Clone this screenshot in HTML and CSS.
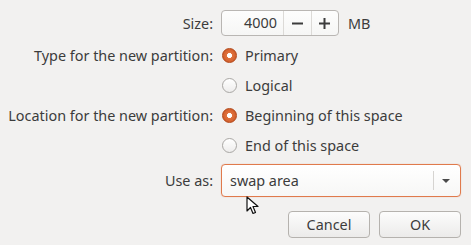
FILE: index.html
```html
<!DOCTYPE html>
<html>
  <head>
    <title>Create partition</title>
    <meta charset="UTF-8"/>
    <link rel="stylesheet" href="styles.css">
  </head>
  <body>
    <div id="dialog">
      <div class="form-grid">
        <div class="label row-size">Size:</div>
        <div class="control row-size">
          <div class="spin">
            <div class="spin-value">4000</div>
            <div class="spin-btn">
              <svg width="11" height="11" viewBox="0 0 11 11"><rect x="0" y="4.5" width="11" height="2" fill="#3c3c3c"/></svg>
            </div>
            <div class="spin-btn">
              <svg width="11" height="11" viewBox="0 0 11 11"><rect x="0" y="4.5" width="11" height="2" fill="#3c3c3c"/><rect x="4.5" y="0" width="2" height="11" fill="#3c3c3c"/></svg>
            </div>
          </div>
          <span class="unit">MB</span>
        </div>

        <div class="label row-radio">Type for the new partition:</div>
        <div class="control row-radio"><span class="radio checked"></span>Primary</div>
        <div class="label row-radio"></div>
        <div class="control row-radio"><span class="radio"></span>Logical</div>

        <div class="label row-radio">Location for the new partition:</div>
        <div class="control row-radio"><span class="radio checked"></span>Beginning of this space</div>
        <div class="label row-radio"></div>
        <div class="control row-radio"><span class="radio"></span>End of this space</div>

        <div class="label row-combo">Use as:</div>
        <div class="control row-combo">
          <div class="combo">
            <span class="combo-text">swap area</span>
            <span class="combo-sep"></span>
            <span class="combo-arrow"></span>
          </div>
        </div>
      </div>

      <div class="buttons">
        <button class="btn">Cancel</button>
        <button class="btn">OK</button>
      </div>

      <!-- mouse pointer sitting over the combo -->
      <svg class="pointer" width="14" height="19" viewBox="0 0 14 19">
        <path d="M1 1 L1 15 L4.5 11.5 L7 17.5 L9.5 16.5 L7 10.5 L12 10.5 Z" fill="#fff" stroke="#111" stroke-width="1.2" stroke-linejoin="round"/>
      </svg>
    </div>
  </body>
</html>
```

FILE: styles.css
```css
body {
  margin: 0;
  background-color: #f2f1f0;
  color: #3c3c3c;
  font-family: "Noto Sans", "DejaVu Sans", sans-serif;
  font-size: 14.4px;
}
#dialog {
  position: relative;
  width: 471px;
  height: 245px;
  padding: 10px 10px 0 0;
  box-sizing: border-box;
}
.form-grid {
  display: grid;
  grid-template-columns: 213px 1fr;
  column-gap: 8px;
}
.label {
  display: flex;
  align-items: center;
  justify-content: flex-end;
  white-space: nowrap;
}
.control {
  display: flex;
  align-items: center;
}
.row-size {
  height: 26px;
  margin-bottom: 4px;
}
.row-radio {
  height: 30px;
}
.row-combo {
  height: 33px;
  margin-top: 4px;
}
.spin {
  display: flex;
  width: 118px;
  height: 26px;
  box-sizing: border-box;
  border: 1px solid #b9b6b3;
  border-radius: 4px;
  background: linear-gradient(#fdfdfd, #f6f6f5);
}
.spin-value {
  width: 61px;
  padding-right: 6px;
  box-sizing: border-box;
  text-align: right;
  line-height: 24px;
}
.spin-btn {
  flex: 1;
  display: flex;
  align-items: center;
  justify-content: center;
  border-left: 1px solid #dcdad7;
}
.unit {
  margin-left: 9px;
}
.radio {
  width: 15px;
  height: 15px;
  box-sizing: border-box;
  margin: 0 8px 0 1px;
  border-radius: 50%;
  border: 1px solid #a9a7a4;
  background: linear-gradient(#ffffff, #eeedec);
}
.radio.checked {
  border: 1px solid #b24617;
  background: radial-gradient(circle, #ffffff 0, #ffffff 2.2px, #e0733f 2.8px, #c95220 100%);
}
.combo {
  flex: 1;
  display: flex;
  align-items: center;
  height: 33px;
  box-sizing: border-box;
  border: 1px solid #e07a4c;
  border-radius: 4px;
  background: linear-gradient(#ffffff, #f7f7f6);
  box-shadow: 0 0 1px 0 rgba(224, 122, 76, 0.6);
}
.combo-text {
  flex: 1;
  padding-left: 8px;
}
.combo-sep {
  width: 1px;
  height: 19px;
  background-color: #d6d4d1;
}
.combo-arrow {
  width: 0;
  height: 0;
  margin: 0 10px 0 8px;
  border-left: 4px solid transparent;
  border-right: 4px solid transparent;
  border-top: 4px solid #4a4a4a;
}
.buttons {
  display: flex;
  justify-content: flex-end;
  gap: 9px;
  margin-top: 14px;
}
.btn {
  width: 82px;
  height: 27px;
  border: 1px solid #b5b2ae;
  border-radius: 4px;
  background: linear-gradient(#fcfcfc, #ecebea);
  color: #3c3c3c;
  font-family: "Noto Sans", "DejaVu Sans", sans-serif;
  font-size: 14.4px;
  padding: 0;
}
.pointer {
  position: absolute;
  left: 246px;
  top: 196px;
}
```
